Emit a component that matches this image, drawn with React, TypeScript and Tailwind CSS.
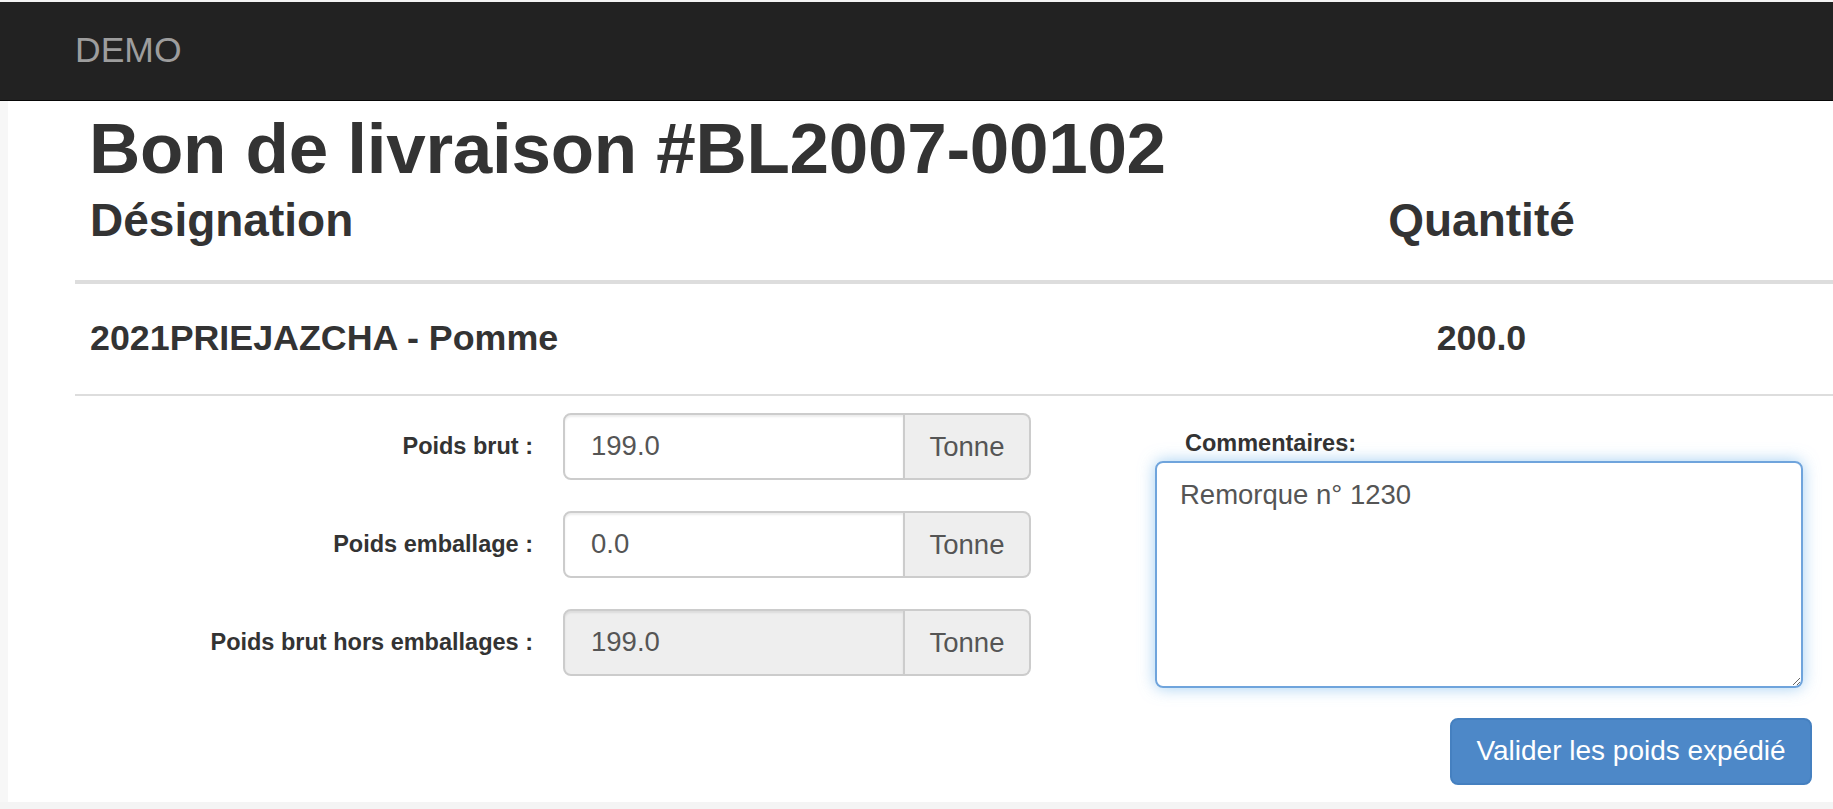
import React from 'react'

type WeightRow = {
  label: string
  value: string
  disabled?: boolean
}

const weightRows: WeightRow[] = [
  { label: 'Poids brut :', value: '199.0' },
  { label: 'Poids emballage :', value: '0.0' },
  { label: 'Poids brut hors emballages :', value: '199.0', disabled: true }
]

const WeightInput = ({ value, disabled }: { value: string; disabled?: boolean }) => {
  return (
    <div className="flex h-[67px]">
      <input
        type="text"
        defaultValue={value}
        readOnly={disabled}
        className={`min-w-0 flex-1 h-full pl-[26px] border-2 border-[#ccc] rounded-l-[8px] text-[27.5px] text-[#555] outline-none shadow-[inset_0_2px_2px_rgba(0,0,0,0.075)] ${
          disabled ? 'bg-[#eee]' : 'bg-white'
        }`}
      />
      <span className="w-[126px] h-full flex items-center justify-center border-2 border-l-0 border-[#ccc] rounded-r-[8px] bg-[#eee] text-[27.5px] text-[#555]">
        Tonne
      </span>
    </div>
  )
}

const App = () => {
  return (
    <div className="min-h-screen bg-[#f4f4f4] pt-[2px] font-['Liberation_Sans',Arial,sans-serif] text-[#333]">
      {/* Navbar */}
      <nav className="h-[99px] bg-[#222] border-b border-[#080808] flex items-center pl-[75px]">
        <span className="text-[35.5px] leading-none text-[#9d9d9d]">DEMO</span>
      </nav>

      <div className="flex">
        <div className="w-[8px] bg-[#f7f7f7]" />
        <main className="flex-1 bg-white pl-[67px] pb-[17px] overflow-hidden">
          <h1 className="mt-[9px] pl-[14px] text-[71px] leading-[1.1] font-bold tracking-[-0.28px] whitespace-nowrap">
            Bon de livraison #BL2007-00102
          </h1>

          {/* Table */}
          <div className="grid grid-cols-[1055px_1fr] border-b-4 border-[#ddd] pt-[7px] pb-[34px]">
            <h3 className="px-[15px] text-[46px] leading-[1.1] font-bold">Désignation</h3>
            <h3 className="text-center text-[46px] leading-[1.1] font-bold">Quantité</h3>
          </div>
          <div className="grid grid-cols-[1055px_1fr] h-[112px] items-center border-b-2 border-[#ddd]">
            <div className="px-[15px] text-[35.8px] leading-[1.1] font-bold whitespace-nowrap">
              2021PRIEJAZCHA - Pomme
            </div>
            <div className="text-center text-[35.8px] leading-[1.1] font-bold">200.0</div>
          </div>

          {/* Form */}
          <div className="flex items-start mt-[17px]">
            <div className="grid grid-cols-[458px_468px] gap-x-[30px] gap-y-[31px] items-center">
              {weightRows.map((row) => (
                <React.Fragment key={row.label}>
                  <label className="text-right text-[23.5px] font-bold whitespace-nowrap">{row.label}</label>
                  <WeightInput value={row.value} disabled={row.disabled} />
                </React.Fragment>
              ))}
            </div>
            <div className="ml-[124px] pt-[18px] w-[648px]">
              <label className="block pl-[30px] text-[23.5px] leading-[1.1] font-bold mb-[4px]">Commentaires:</label>
              <textarea
                defaultValue="Remorque n° 1230"
                className="block w-[648px] h-[227px] pl-[23px] pt-[12px] border-2 border-[#6fa4dc] rounded-[8px] text-[27.5px] leading-[1.43] text-[#555] outline-none shadow-[0_0_16px_rgba(102,175,233,0.6)]"
              />
            </div>
          </div>

          <div className="flex justify-end mt-[30px] pr-[21px]">
            <button className="w-[362px] h-[67px] rounded-[8px] bg-[#4d88c8] border-2 border-[#4580c0] text-white text-[28px]">
              Valider les poids expédié
            </button>
          </div>
        </main>
      </div>
    </div>
  )
}

export default App
